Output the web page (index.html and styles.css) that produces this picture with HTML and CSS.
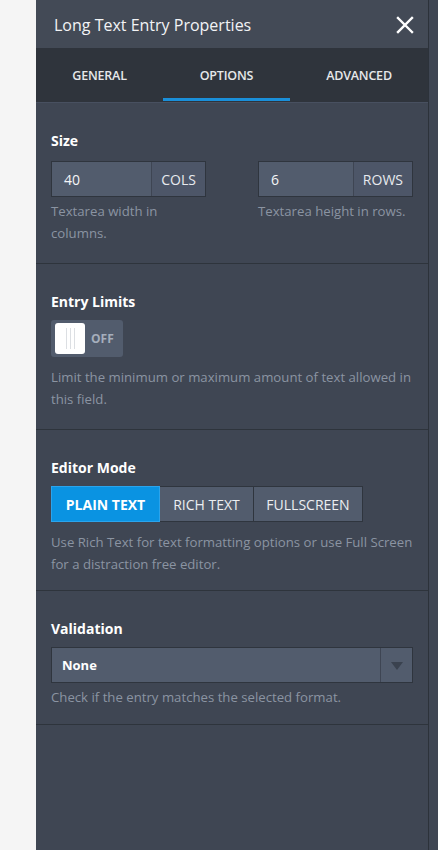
FILE: index.html
```html
<!DOCTYPE html>
<html lang="en">
<head>
  <meta charset="UTF-8" />
  <meta name="viewport" content="width=device-width, initial-scale=1" />
  <title>Long Text Entry Properties</title>
  <link rel="stylesheet" href="styles.css">
</head>
<body>

  <div class="page">
    <div class="gutter"></div>

    <div class="panel">
      <div class="panel-header">
        <h1>Long Text Entry Properties</h1>
        <button class="close" aria-label="Close">
          <svg width="18" height="18" viewBox="0 0 18 18">
            <path d="M2 2 L16 16 M16 2 L2 16" stroke="#fff" stroke-width="2.4" stroke-linecap="square" />
          </svg>
        </button>
      </div>

      <div class="tabs">
        <div class="tab">GENERAL</div>
        <div class="tab active">OPTIONS</div>
        <div class="tab">ADVANCED</div>
      </div>

      <div class="section size">
        <div class="label">Size</div>
        <div class="size-grid">
          <div>
            <div class="input-group">
              <div class="input">40</div>
              <div class="addon">COLS</div>
            </div>
            <p class="help tight">Textarea width in columns.</p>
          </div>
          <div>
            <div class="input-group">
              <div class="input">6</div>
              <div class="addon">ROWS</div>
            </div>
            <p class="help tight">Textarea height in rows.</p>
          </div>
        </div>
      </div>

      <div class="section limits">
        <div class="label">Entry Limits</div>
        <div class="toggle">
          <span class="knob"><i></i><i></i><i></i></span>
          <span class="toggle-text">OFF</span>
        </div>
        <p class="help">Limit the minimum or maximum amount of text allowed in this field.</p>
      </div>

      <div class="section editor">
        <div class="label">Editor Mode</div>
        <div class="btn-group">
          <button class="btn selected">PLAIN TEXT</button>
          <button class="btn rich">RICH TEXT</button>
          <button class="btn full">FULLSCREEN</button>
        </div>
        <p class="help">Use Rich Text for text formatting options or use Full Screen for a distraction free editor.</p>
      </div>

      <div class="section validation">
        <div class="label">Validation</div>
        <div class="select">
          <span class="select-value">None</span>
          <span class="select-arrow"></span>
        </div>
        <p class="help tight">Check if the entry matches the selected format.</p>
      </div>
    </div>

    <div class="rail"></div>
  </div>

</body>
</html>
```

FILE: styles.css
```css
/* Reset */
* {
  box-sizing: border-box;
  margin: 0;
  padding: 0;
  font-family: 'Open Sans', 'Noto Sans', sans-serif;
}

body {
  background: #f5f5f5;
}

.page {
  display: flex;
  min-height: 850px;
}

.gutter {
  width: 36px;
  background: #f5f5f5;
}

.panel {
  width: 393px;
  background: #3f4653;
  border-right: 1px solid #2c323a;
}

.rail {
  flex: 1;
  background: #3f4653;
}

/* Header */
.panel-header {
  height: 48px;
  background: #434a56;
  display: flex;
  align-items: center;
  justify-content: space-between;
  padding: 2px 14px 0 18px;
}

.panel-header h1 {
  font-size: 16px;
  font-weight: 400;
  color: #f2f3f5;
}

.close {
  background: none;
  border: none;
  display: flex;
  padding: 0;
}

/* Tabs */
.tabs {
  display: grid;
  grid-template-columns: 127px 127px 1fr;
  height: 55px;
  background: #2f343c;
  border-bottom: 1px solid #485060;
}

.tab {
  display: flex;
  align-items: center;
  justify-content: center;
  font-size: 12.5px;
  font-weight: 600;
  color: #e6e8ea;
  letter-spacing: -0.2px;
  position: relative;
}

.tab.active::after {
  content: "";
  position: absolute;
  left: 0;
  right: 0;
  bottom: 1px;
  height: 3px;
  background: #1a8fd9;
}

/* Sections */
.section {
  padding: 28px 15px 17px;
  border-bottom: 1px solid #2e343c;
}

.section.size {
  padding-bottom: 19px;
}

.section.limits {
  padding-bottom: 19px;
}

.section.editor {
  padding-bottom: 15px;
}

.section.validation {
  padding-bottom: 16px;
}

.label {
  font-size: 14px;
  line-height: 20px;
  font-weight: 700;
  color: #fff;
  margin-bottom: 8px;
}

.size .label {
  margin-bottom: 10px;
}

.help {
  font-size: 13.2px;
  line-height: 22px;
  color: #8b94a2;
  margin-top: 9px;
}

.help.tight {
  margin-top: 3px;
}

/* Size inputs */
.size-grid {
  display: grid;
  grid-template-columns: 155px 155px;
  gap: 52px;
}

.input-group {
  display: flex;
  height: 36px;
  border: 1px solid #2f353e;
  background: #525c6d;
}

.input {
  flex: 1;
  display: flex;
  align-items: center;
  padding-left: 12px;
  font-size: 14px;
  color: #f4f5f7;
}

.addon {
  display: flex;
  align-items: center;
  padding: 0 9px;
  border-left: 1px solid #3e4553;
  font-size: 14px;
  color: #e8eaee;
  background: #4d5668;
}

/* Toggle */
.toggle {
  width: 72px;
  height: 37px;
  background: #525c6d;
  border-radius: 3px;
  display: flex;
  align-items: center;
  padding: 0 4px;
  gap: 6px;
}

.knob {
  width: 30px;
  height: 31px;
  background: #fff;
  border-radius: 3px;
  display: flex;
  justify-content: center;
  align-items: center;
  gap: 3px;
}

.knob i {
  width: 1px;
  height: 21px;
  background: #dcdfe3;
}

.toggle-text {
  font-size: 12px;
  font-weight: 700;
  color: #a5aebc;
}

/* Editor mode buttons */
.btn-group {
  display: flex;
}

.btn {
  height: 36px;
  background: #525c6d;
  border: 1px solid #2f353e;
  border-left: none;
  font-size: 14px;
  color: #eceef1;
}

.btn.selected {
  width: 109px;
  background: #0a93e2;
  border: 1px solid #2ba4ec;
  font-weight: 700;
  color: #fff;
}

.btn.rich {
  width: 94px;
}

.btn.full {
  width: 109px;
}

/* Select */
.select {
  display: flex;
  height: 36px;
  border: 1px solid #2f353e;
  background: #525c6d;
}

.select-value {
  flex: 1;
  display: flex;
  align-items: center;
  padding-left: 10px;
  font-size: 13px;
  font-weight: 700;
  color: #fff;
}

.select-arrow {
  width: 32px;
  border-left: 1px solid #3e4553;
  display: flex;
  align-items: center;
  justify-content: center;
}

.select-arrow::before {
  content: "";
  border-left: 6px solid transparent;
  border-right: 6px solid transparent;
  border-top: 8px solid #3a424f;
  margin-top: 2px;
}
```
